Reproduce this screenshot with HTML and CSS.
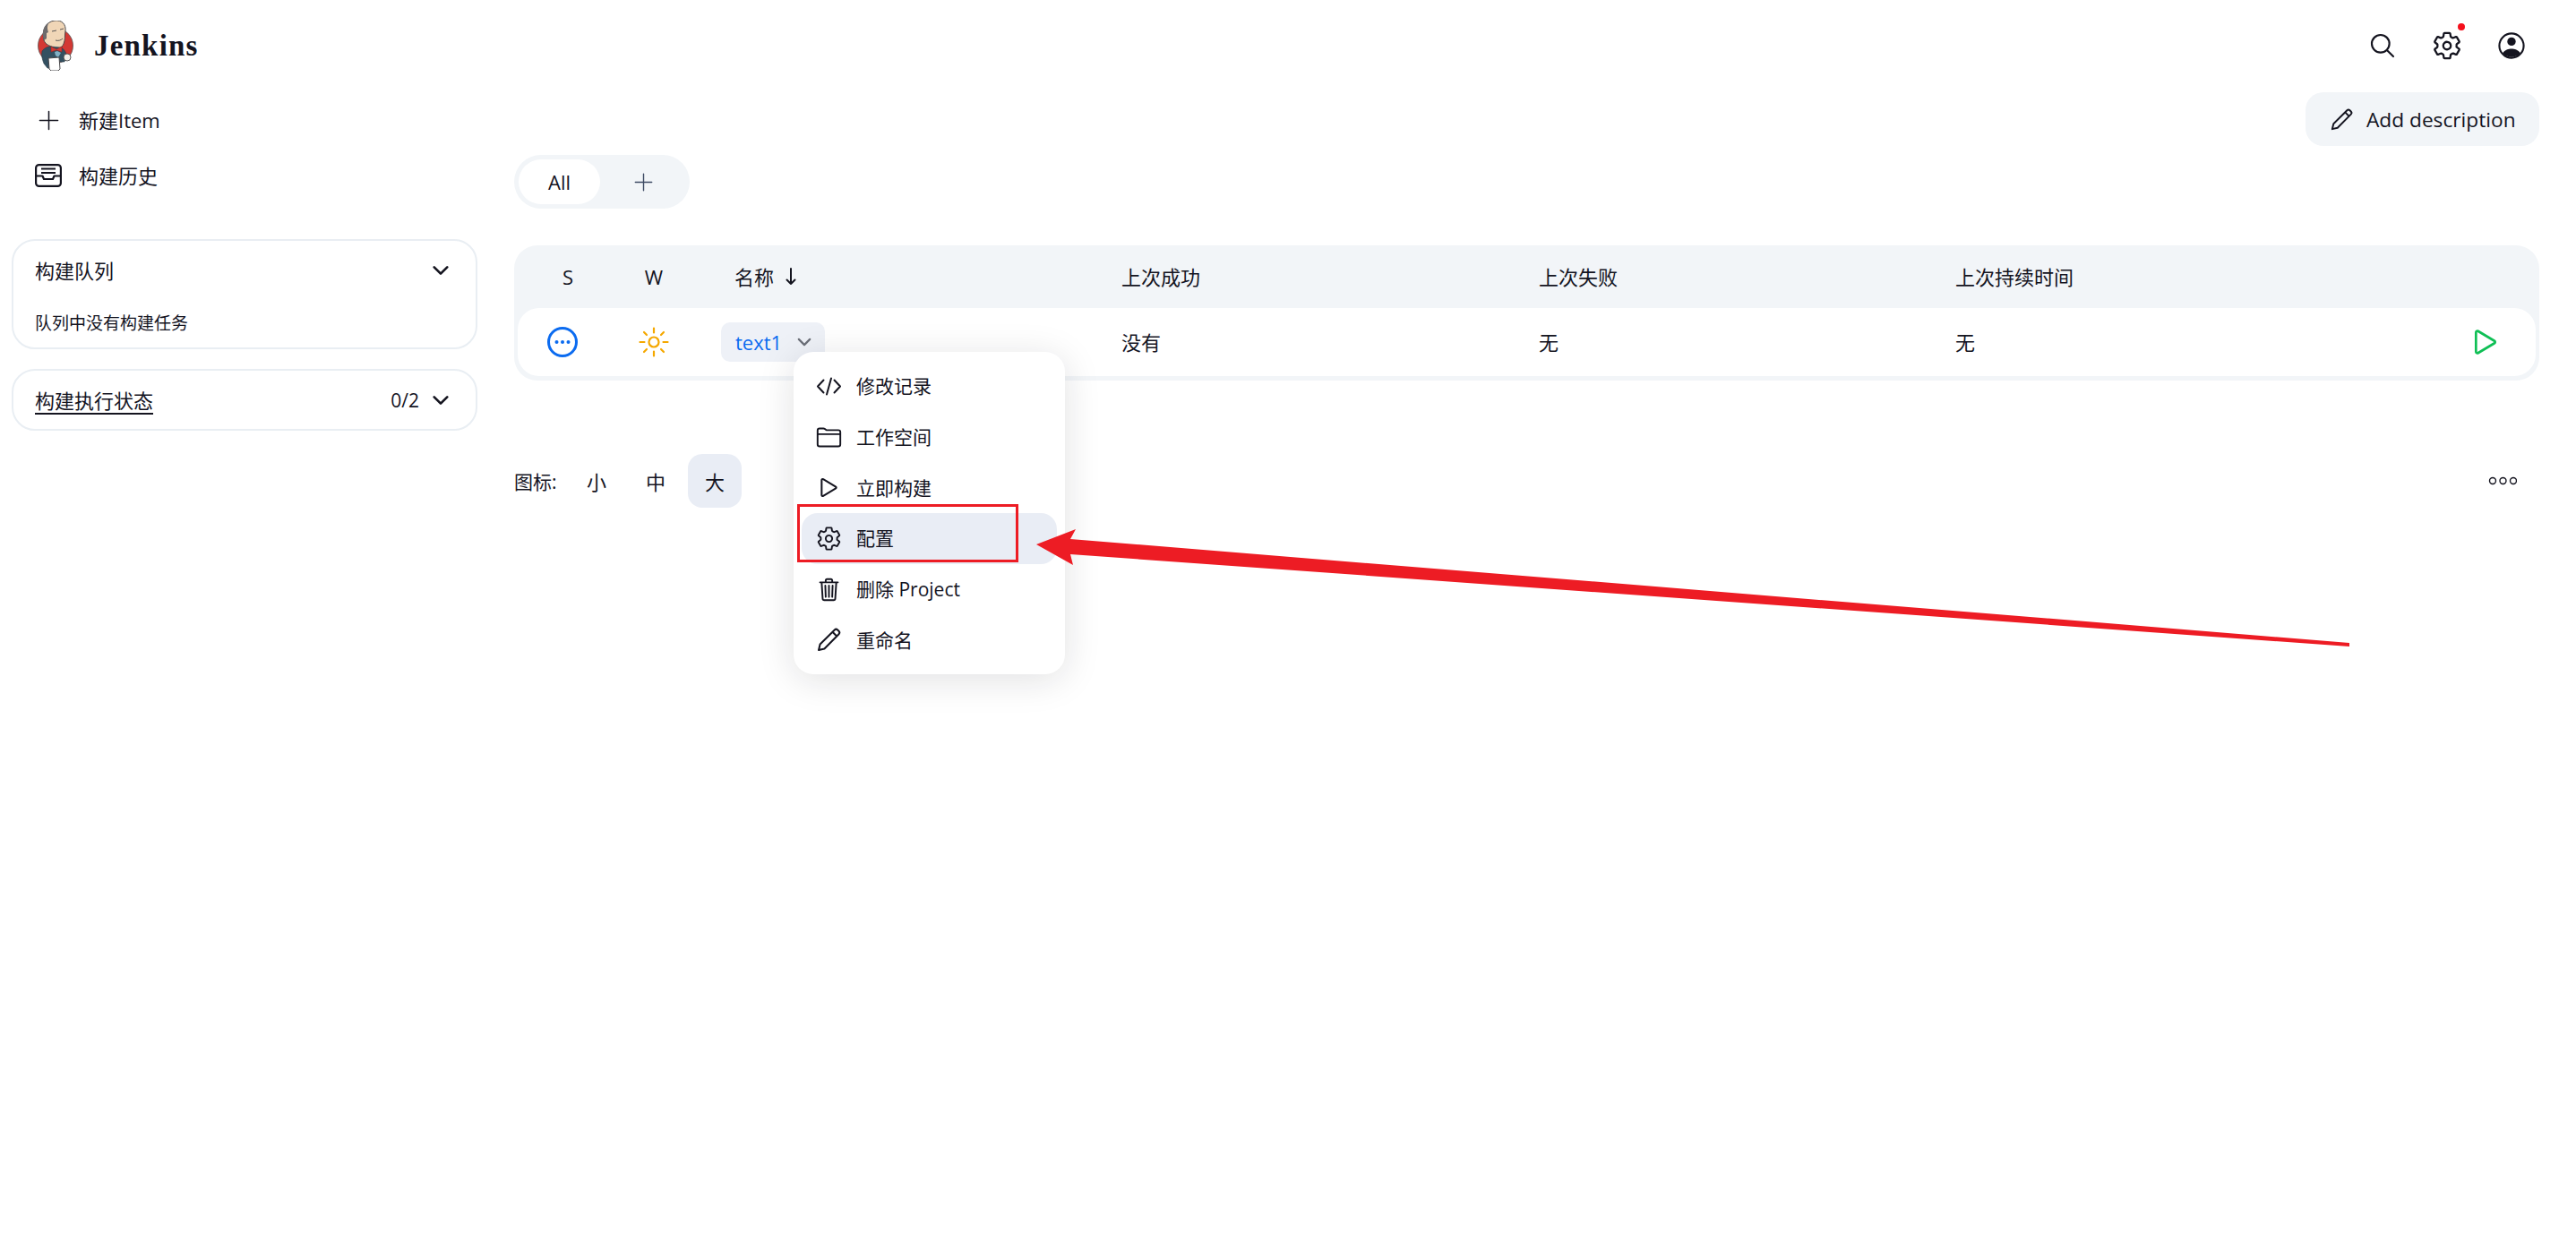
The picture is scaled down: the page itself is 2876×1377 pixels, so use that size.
FILE: index.html
```html
<!DOCTYPE html>
<html lang="zh">
  <head>
    <meta charset="utf-8">
    <title>Jenkins</title>
    <link rel="stylesheet" href="styles.css">
  </head>
  <body>
    <svg class="defs" width="0" height="0">
      <symbol id="i-gear" viewBox="0 0 512 512"><path fill="none" stroke="currentColor" stroke-width="34" stroke-linecap="round" stroke-linejoin="round" d="M262.29 192.31a64 64 0 1057.4 57.4 64.13 64.13 0 00-57.4-57.4zM416.39 256a154.34 154.34 0 01-1.53 20.79l45.21 35.46a10.81 10.81 0 012.45 13.75l-42.77 74a10.81 10.81 0 01-13.14 4.59l-44.9-18.08a16.11 16.11 0 00-15.17 1.75A164.48 164.48 0 01325 400.8a15.94 15.94 0 00-8.82 12.14l-6.73 47.89a11.08 11.08 0 01-10.68 9.17h-85.54a11.11 11.11 0 01-10.69-8.87l-6.72-47.82a16.07 16.07 0 00-9-12.22 155.3 155.3 0 01-21.46-12.57 16 16 0 00-15.11-1.71l-44.89 18.07a10.81 10.81 0 01-13.14-4.58l-42.77-74a10.8 10.8 0 012.45-13.75l38.21-30a16.05 16.05 0 006-14.08c-.36-4.17-.58-8.33-.58-12.5s.21-8.27.58-12.35a16 16 0 00-6.07-13.94l-38.19-30A10.81 10.81 0 0149.48 186l42.77-74a10.81 10.81 0 0113.14-4.59l44.9 18.08a16.11 16.11 0 0015.17-1.75A164.48 164.48 0 01187 111.2a15.94 15.94 0 008.82-12.14l6.73-47.89A11.08 11.08 0 01213.23 42h85.54a11.11 11.11 0 0110.69 8.87l6.72 47.82a16.07 16.07 0 009 12.22 155.3 155.3 0 0121.46 12.57 16 16 0 0015.11 1.71l44.89-18.07a10.81 10.81 0 0113.14 4.58l42.77 74a10.8 10.8 0 01-2.45 13.75l-38.21 30a16.05 16.05 0 00-6.05 14.08c.33 4.14.55 8.3.55 12.47z"/></symbol>
      <symbol id="i-pencil" viewBox="0 0 24 24"><path fill="none" stroke="currentColor" stroke-width="1.700" stroke-linecap="round" stroke-linejoin="round" d="M2.500 21.500l1.300-5.300L17.200 2.900a2 2 0 012.800 0l1.100 1.100a2 2 0 010 2.800L7.800 20.200zM15.300 4.800l3.900 3.900"/></symbol>
      <symbol id="i-play" viewBox="0 0 512 512"><path fill="none" stroke="currentColor" stroke-width="36" stroke-linejoin="round" d="M112 111v290c0 17.44 17 28.52 31 20.16l247.9-148.37c12.12-7.25 12.12-26.33 0-33.58L143 90.84c-14-8.36-31 2.72-31 20.16z"/></symbol>
      <symbol id="i-chevron" viewBox="0 0 512 512"><path fill="none" stroke="currentColor" stroke-width="52" stroke-linecap="round" stroke-linejoin="round" d="M112 184l144 144 144-144"/></symbol>
      <symbol id="i-plus" viewBox="0 0 512 512"><path fill="none" stroke="currentColor" stroke-width="34" stroke-linecap="round" d="M256 32v448M32 256h448"/></symbol>
    </svg>

    <div class="page">
      <header class="topbar">
        <a class="brand">
          <svg class="logo" viewBox="0 0 42 56">
            <circle cx="22" cy="28" r="19.5" fill="#d33833" stroke="#555" stroke-width="0.8"/>
            <path d="M9 22C6 10 12 1 21 0c8-1 13 4 12 12-1 6 0 9-2 14-2 5-7 6-11 4-5-2-9-3-11-8z" fill="#f0d6b7" stroke="#49484a" stroke-width="1"/>
            <path d="M9 22C6 11 10 4 15 2c-3 4-2 8-1 11l-2 1 0 6z" fill="#6d6b6d"/>
            <path d="M18 12l5-1M27 10l4-1M22 22c3 1 6 0 8-2" fill="none" stroke="#49484a" stroke-width="0.9"/>
            <path d="M7 34c3-4 7-5 9-5l12 1c4 2 6 6 6 9l-2 7H22v8l-9-1-4-5c-2-5-3-10-2-14z" fill="#335061" stroke="#2a3b46" stroke-width="0.6"/>
            <path d="M17 29l6 3 6-3 0 6-6-2-6 2z" fill="#d33833" stroke="#8a2320" stroke-width="0.5"/>
            <path d="M21 35l3-1 4 2-3 5-3-2z" fill="#81b0c4"/>
            <path d="M14 42l12-1 1 13-2 2h-8l-2-2z" fill="#fff" stroke="#49484a" stroke-width="1"/>
            <circle cx="35" cy="41" r="4" fill="#f4f1ec" stroke="#49484a" stroke-width="0.9"/>
          </svg>
          <span class="brand-name">Jenkins</span>
        </a>
        <nav class="top-icons">
          <span class="icon-box">
            <svg class="search-icon" viewBox="0 0 512 512"><path fill="none" stroke="currentColor" stroke-width="34" stroke-miterlimit="10" d="M221.09 64a157.09 157.09 0 10157.09 157.09A157.1 157.1 0 00221.09 64z"/><path fill="none" stroke="currentColor" stroke-width="34" stroke-linecap="round" d="M338.29 338.29L448 448"/></svg>
          </span>
          <span class="icon-box">
            <svg class="gear-icon"><use href="#i-gear"/></svg>
            <span class="dot"></span>
          </span>
          <svg class="top-icon" viewBox="0 0 512 512">
            <circle cx="256" cy="256" r="232" fill="none" stroke="currentColor" stroke-width="36"/>
            <circle cx="256" cy="178" r="80" fill="currentColor"/>
            <path d="M88 396c40-60 110-80 168-80s128 20 168 80a224 224 0 01-336 0z" fill="currentColor"/>
          </svg>
        </nav>
      </header>

      <div class="layout">
        <aside class="sidebar">
          <a class="side-link">
            <span class="side-icon"><svg class="plus-icon"><use href="#i-plus"/></svg></span>
            <span class="side-text">新建Item</span>
          </a>
          <a class="side-link">
            <span class="side-icon">
              <svg class="inbox-icon" viewBox="0 0 30 26" fill="none" stroke="currentColor" stroke-width="2.2" stroke-linejoin="round"><rect x="1.1" y="1.1" width="27.8" height="23.8" rx="3.5"/><path d="M7 5.5h16M7 10h16M1.1 13.5h7.4l1.5 3.5h10l1.5-3.5h7.4"/></svg>
            </span>
            <span class="side-text">构建历史</span>
          </a>

          <section class="card card-queue">
            <div class="card-head">
              <span class="card-title">构建队列</span>
              <svg class="chev"><use href="#i-chevron"/></svg>
            </div>
            <div class="card-body">队列中没有构建任务</div>
          </section>

          <section class="card">
            <div class="card-head">
              <a class="card-title card-link">构建执行状态</a>
              <span class="card-right">
                <span class="count">0/2</span>
                <svg class="chev"><use href="#i-chevron"/></svg>
              </span>
            </div>
          </section>
        </aside>

        <main class="main">
          <div class="actions">
            <a class="btn">
              <svg class="btn-icon"><use href="#i-pencil"/></svg>
              <span>Add description</span>
            </a>
          </div>

          <div class="tabs">
            <a class="tab active">All</a>
            <a class="tab-add"><svg class="tab-plus"><use href="#i-plus"/></svg></a>
          </div>

          <div class="table">
            <div class="row head">
              <div class="cell center">S</div>
              <div class="cell center">W</div>
              <div class="cell name-head"><span class="txt">名称</span>
                <svg class="sort" viewBox="0 0 14 20" fill="none" stroke="currentColor" stroke-width="2" stroke-linecap="round" stroke-linejoin="round"><path d="M7 1v17M2.5 13.5L7 18l4.500-4.500"/></svg>
              </div>
              <div class="cell txt">上次成功</div>
              <div class="cell txt">上次失败</div>
              <div class="cell txt">上次持续时间</div>
              <div class="cell"></div>
            </div>
            <div class="row body">
              <div class="cell center">
                <svg class="status" viewBox="0 0 34 34"><circle cx="17" cy="17" r="15.500" fill="none" stroke="currentColor" stroke-width="3"/><circle cx="10.500" cy="17" r="2" fill="currentColor"/><circle cx="17" cy="17" r="2" fill="currentColor"/><circle cx="23.500" cy="17" r="2" fill="currentColor"/></svg>
              </div>
              <div class="cell center">
                <svg class="sun" viewBox="0 0 34 34" fill="none" stroke="currentColor" stroke-width="2.200" stroke-linecap="round"><circle cx="17" cy="17" r="5.500"/><path d="M17 1.500v5M17 27.500v5M1.500 17h5M27.500 17h5M6 6l3 3M25 25l3 3M6 28l3-3M25 9l3-3"/></svg>
              </div>
              <div class="cell name-cell">
                <div class="chip-wrap">
                  <a class="chip">text1<svg class="chip-chev"><use href="#i-chevron"/></svg></a>
                  <div class="menu">
                    <a class="menu-item">
                      <svg class="menu-icon" viewBox="0 0 29 29" fill="none" stroke="currentColor" stroke-width="2" stroke-linecap="round" stroke-linejoin="round"><path d="M8.500 7.500L2 14.500l6.500 7M20.500 7.500l6.500 7-6.500 7M17 5.500l-5 18"/></svg>
                      <span class="txt">修改记录</span>
                    </a>
                    <a class="menu-item">
                      <svg class="menu-icon" viewBox="0 0 512 512"><path fill="none" stroke="currentColor" stroke-width="34" stroke-linecap="round" stroke-linejoin="round" d="M440 432H72a40 40 0 01-40-40V120a40 40 0 0140-40h75.890a40 40 0 0122.190 6.720l27.840 18.560a40 40 0 0022.190 6.720H440a40 40 0 0140 40v240a40 40 0 01-40 40zM32 192h448"/></svg>
                      <span class="txt">工作空间</span>
                    </a>
                    <a class="menu-item">
                      <svg class="menu-icon"><use href="#i-play"/></svg>
                      <span class="txt">立即构建</span>
                    </a>
                    <a class="menu-item hovered">
                      <svg class="menu-icon"><use href="#i-gear"/></svg>
                      <span class="txt">配置</span>
                    </a>
                    <a class="menu-item">
                      <svg class="menu-icon" viewBox="0 0 512 512" fill="none" stroke="currentColor" stroke-width="34" stroke-linecap="round" stroke-linejoin="round"><path d="M112 112l20 320c.95 18.490 14.400 32 32 32h184c17.670 0 30.870-13.510 32-32l20-320M80 112h352M192 112V72a23.930 23.930 0 0124-24h80a23.930 23.930 0 0124 24v40M256 176v224M184 176l8 224M328 176l-8 224"/></svg>
                      <span class="txt">删除 Project</span>
                    </a>
                    <a class="menu-item">
                      <svg class="menu-icon"><use href="#i-pencil"/></svg>
                      <span class="txt">重命名</span>
                    </a>
                  </div>
                </div>
              </div>
              <div class="cell txt">没有</div>
              <div class="cell txt">无</div>
              <div class="cell txt">无</div>
              <div class="cell run-cell"><svg class="run"><use href="#i-play"/></svg></div>
            </div>
          </div>

          <div class="table-foot">
            <div class="sizes">
              <span class="sizes-label">图标:</span>
              <a class="size">小</a>
              <a class="size">中</a>
              <a class="size active">大</a>
            </div>
            <svg class="more" viewBox="0 0 32 10" fill="none" stroke="currentColor" stroke-width="1.400"><circle cx="5" cy="5" r="3.500"/><circle cx="16.500" cy="5" r="3.500"/><circle cx="28" cy="5" r="3.500"/></svg>
          </div>
        </main>
      </div>
    </div>

    <!-- annotation drawn over the screenshot -->
    <svg class="annotation" viewBox="0 0 2876 760">
      <rect x="891.500" y="564.500" width="244" height="62" fill="none" stroke="#ed1c24" stroke-width="3"/>
      <polygon points="1157,608 1201,591 1195,602 2623,718 2623,722 1195,619 1198,631" fill="#ed1c24"/>
    </svg>
  </body>
</html>
```

FILE: styles.css
```css
* {
  box-sizing: border-box;
}
html, body {
  margin: 0;
  padding: 0;
  background: #fff;
}
body {
  position: relative;
  min-height: 1377px;
  font-family: "Open Sans", "Noto Sans CJK SC", sans-serif;
  font-size: 22px;
  color: #14141f;
}
a {
  color: inherit;
}
.defs {
  position: absolute;
}
.annotation {
  position: absolute;
  left: 0;
  top: 0;
  z-index: 5;
  width: 2876px;
  height: 760px;
  pointer-events: none;
}
.txt {
  padding-bottom: 2px;
}

/* top bar */
.topbar {
  height: 103px;
  padding: 0 57px 1px 40px;
  display: flex;
  align-items: center;
  justify-content: space-between;
}
.brand {
  display: flex;
  align-items: center;
  gap: 23px;
}
.logo {
  width: 42px;
  height: 56px;
}
.brand-name {
  font-family: "Liberation Serif", serif;
  font-weight: bold;
  font-size: 33px;
  letter-spacing: 1.200px;
}
.top-icons {
  display: flex;
  align-items: center;
  gap: 42px;
}
.top-icon {
  width: 30px;
  height: 30px;
  display: block;
}
.icon-box {
  position: relative;
  width: 30px;
  height: 30px;
  display: flex;
  align-items: center;
  justify-content: center;
}
.search-icon {
  width: 32px;
  height: 32px;
  flex: none;
}
.gear-icon {
  width: 34px;
  height: 34px;
  flex: none;
}
.dot {
  position: absolute;
  right: -5px;
  top: -10px;
  width: 8px;
  height: 8px;
  border-radius: 50%;
  background: #f5101c;
}

/* page columns */
.layout {
  display: grid;
  grid-template-columns: 574px 1fr;
}
.sidebar {
  padding-left: 13px;
}
.side-link {
  height: 62px;
  padding-left: 26px;
  display: flex;
  align-items: center;
  gap: 19px;
}
.side-text {
  padding-bottom: 3px;
}
.side-icon {
  width: 30px;
  display: flex;
  justify-content: center;
}
.plus-icon {
  width: 23px;
  height: 23px;
}
.inbox-icon {
  width: 30px;
  height: 26px;
}
.card {
  width: 520px;
  border: 2px solid #e9eef3;
  border-radius: 26px;
  margin-bottom: 22px;
}
.card-queue {
  margin-top: 40px;
}
.card-head {
  height: 65px;
  padding: 0 26px 0 24px;
  display: flex;
  align-items: center;
  justify-content: space-between;
}
.card-title {
  padding-bottom: 2px;
}
.card-body {
  height: 54px;
  padding: 1px 24px 0;
  line-height: 52px;
  font-size: 19px;
}
.card-link {
  text-decoration: underline;
  text-underline-offset: 5px;
}
.card-right {
  display: flex;
  align-items: center;
  gap: 11px;
}
.count {
  font-size: 21px;
}
.chev {
  width: 26px;
  height: 26px;
  display: block;
}

/* main column */
.main {
  padding-right: 41px;
}
.actions {
  display: flex;
  justify-content: flex-end;
}
.btn {
  width: 261px;
  height: 60px;
  padding-left: 27px;
  background: #f2f5f8;
  border-radius: 20px;
  font-size: 22.700px;
  display: flex;
  align-items: center;
  gap: 14px;
}
.btn-icon {
  width: 27px;
  height: 27px;
}
.tabs {
  width: 196px;
  height: 60px;
  margin-top: 10px;
  padding: 5px;
  background: #f2f5f8;
  border-radius: 30px;
  display: flex;
  align-items: center;
}
.tab {
  width: 91px;
  height: 50px;
  background: #fff;
  border-radius: 25px;
  display: flex;
  align-items: center;
  justify-content: center;
}
.tab-add {
  flex: 1;
  display: flex;
  justify-content: center;
  color: #3d4a63;
  padding-left: 2px;
}
.tab-plus {
  width: 21px;
  height: 21px;
}

/* project table */
.table {
  margin-top: 41px;
  padding: 0 4px 5px;
  background: #f2f5f8;
  border-radius: 26px;
}
.row {
  display: grid;
  grid-template-columns: 112px 80px 482px 466px 465px 1fr 100px;
  align-items: center;
}
.head {
  height: 70px;
}
.body {
  height: 76px;
  background: #fff;
  border-radius: 24px;
}
.center {
  display: flex;
  justify-content: center;
}
.name-head {
  padding-left: 50px;
  display: flex;
  align-items: center;
  gap: 12px;
}
.sort {
  width: 14px;
  height: 20px;
}
.status {
  width: 34px;
  height: 34px;
  margin-right: 12px;
  color: #0b6bf0;
}
.sun {
  width: 34px;
  height: 34px;
  color: #f5a800;
}
.name-cell {
  padding-left: 35px;
}
.chip-wrap {
  position: relative;
  width: 116px;
}
.chip {
  height: 44px;
  padding-left: 16px;
  background: #eef1f7;
  border-radius: 10px;
  color: #0b6bf0;
  display: flex;
  align-items: center;
  gap: 14px;
}
.chip-chev {
  width: 22px;
  height: 22px;
  color: #6b6f78;
}
.menu {
  position: absolute;
  left: 81px;
  top: 33px;
  z-index: 2;
  width: 303px;
  padding: 10px 9px;
  background: #fff;
  border-radius: 22px;
  box-shadow: 0 6px 40px rgba(20, 20, 31, 0.13);
}
.menu-item {
  height: 56.700px;
  padding-left: 16px;
  border-radius: 18px;
  font-size: 21px;
  display: flex;
  align-items: center;
  gap: 16px;
}
.menu-item.hovered {
  background: #e9edf5;
}
.menu-icon {
  width: 29px;
  height: 29px;
  flex: none;
}
.run-cell {
  display: flex;
  justify-content: flex-end;
  padding-right: 37px;
}
.run {
  width: 38px;
  height: 38px;
  color: #0fbf55;
}

/* icon size switch */
.table-foot {
  margin-top: 82px;
  display: flex;
  align-items: center;
  justify-content: space-between;
}
.sizes {
  display: flex;
  align-items: center;
  gap: 6px;
}
.sizes-label {
  width: 56px;
  font-size: 21px;
}
.size {
  width: 60px;
  height: 60px;
  border-radius: 16px;
  display: flex;
  align-items: center;
  justify-content: center;
}
.size.active {
  background: #e9edf5;
}
.more {
  width: 32px;
  height: 10px;
  margin-right: 25px;
}
```
